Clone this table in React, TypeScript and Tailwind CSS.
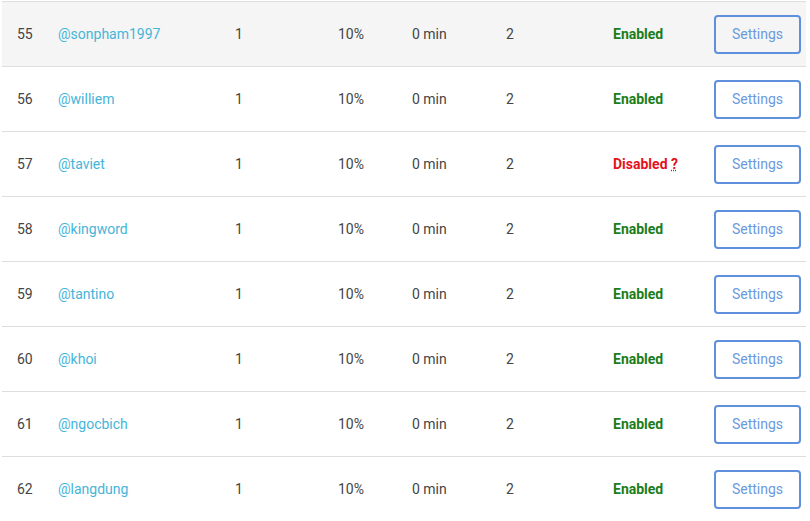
const rows = [
  { id: 55, user: 'sonpham1997', enabled: true },
  { id: 56, user: 'williem', enabled: true },
  { id: 57, user: 'taviet', enabled: false },
  { id: 58, user: 'kingword', enabled: true },
  { id: 59, user: 'tantino', enabled: true },
  { id: 60, user: 'khoi', enabled: true },
  { id: 61, user: 'ngocbich', enabled: true },
  { id: 62, user: 'langdung', enabled: true },
]

export default function App() {
  return (
    <div className="bg-white w-[810px] h-[521px] overflow-hidden pt-px pl-[2px] font-['Roboto',sans-serif] text-[14px] text-[#444]">
      <table className="table-fixed border-collapse w-[804px]">
        <colgroup>
          <col className="w-[41px]" />
          <col className="w-[177px]" />
          <col className="w-[103px]" />
          <col className="w-[74px]" />
          <col className="w-[94px]" />
          <col className="w-[107px]" />
          <col className="w-[101px]" />
          <col />
        </colgroup>
        <tbody>
          {rows.map((r, i) => (
            <tr key={r.id} className={`h-[65px] border-t border-[#dedede] ${i === 0 ? 'bg-[#f5f5f5]' : ''}`}>
              <td className="pl-[15px]">{r.id}</td>
              <td className="pl-[15px] text-[#45b5d9]">@{r.user}</td>
              <td className="pl-[15px]">1</td>
              <td className="pl-[15px]">10%</td>
              <td className="pl-[15px]">0 min</td>
              <td className="pl-[15px]">2</td>
              <td className="pl-[15px] font-bold">
                {r.enabled ? (
                  <span className="text-[#1b7d1b]">Enabled</span>
                ) : (
                  <span className="text-[#e3121c]">
                    Disabled{' '}
                    <abbr title="Disabled" className="underline decoration-dotted no-underline-offset cursor-help">?</abbr>
                  </span>
                )}
              </td>
              <td className="pl-[15px]" colSpan={2}>
                <button className="w-[87px] h-[39px] border-2 border-[#5f90dd] rounded-[4px] bg-transparent text-[#6a9ade] text-[14px]">
                  Settings
                </button>
              </td>
            </tr>
          ))}
        </tbody>
      </table>
    </div>
  )
}
